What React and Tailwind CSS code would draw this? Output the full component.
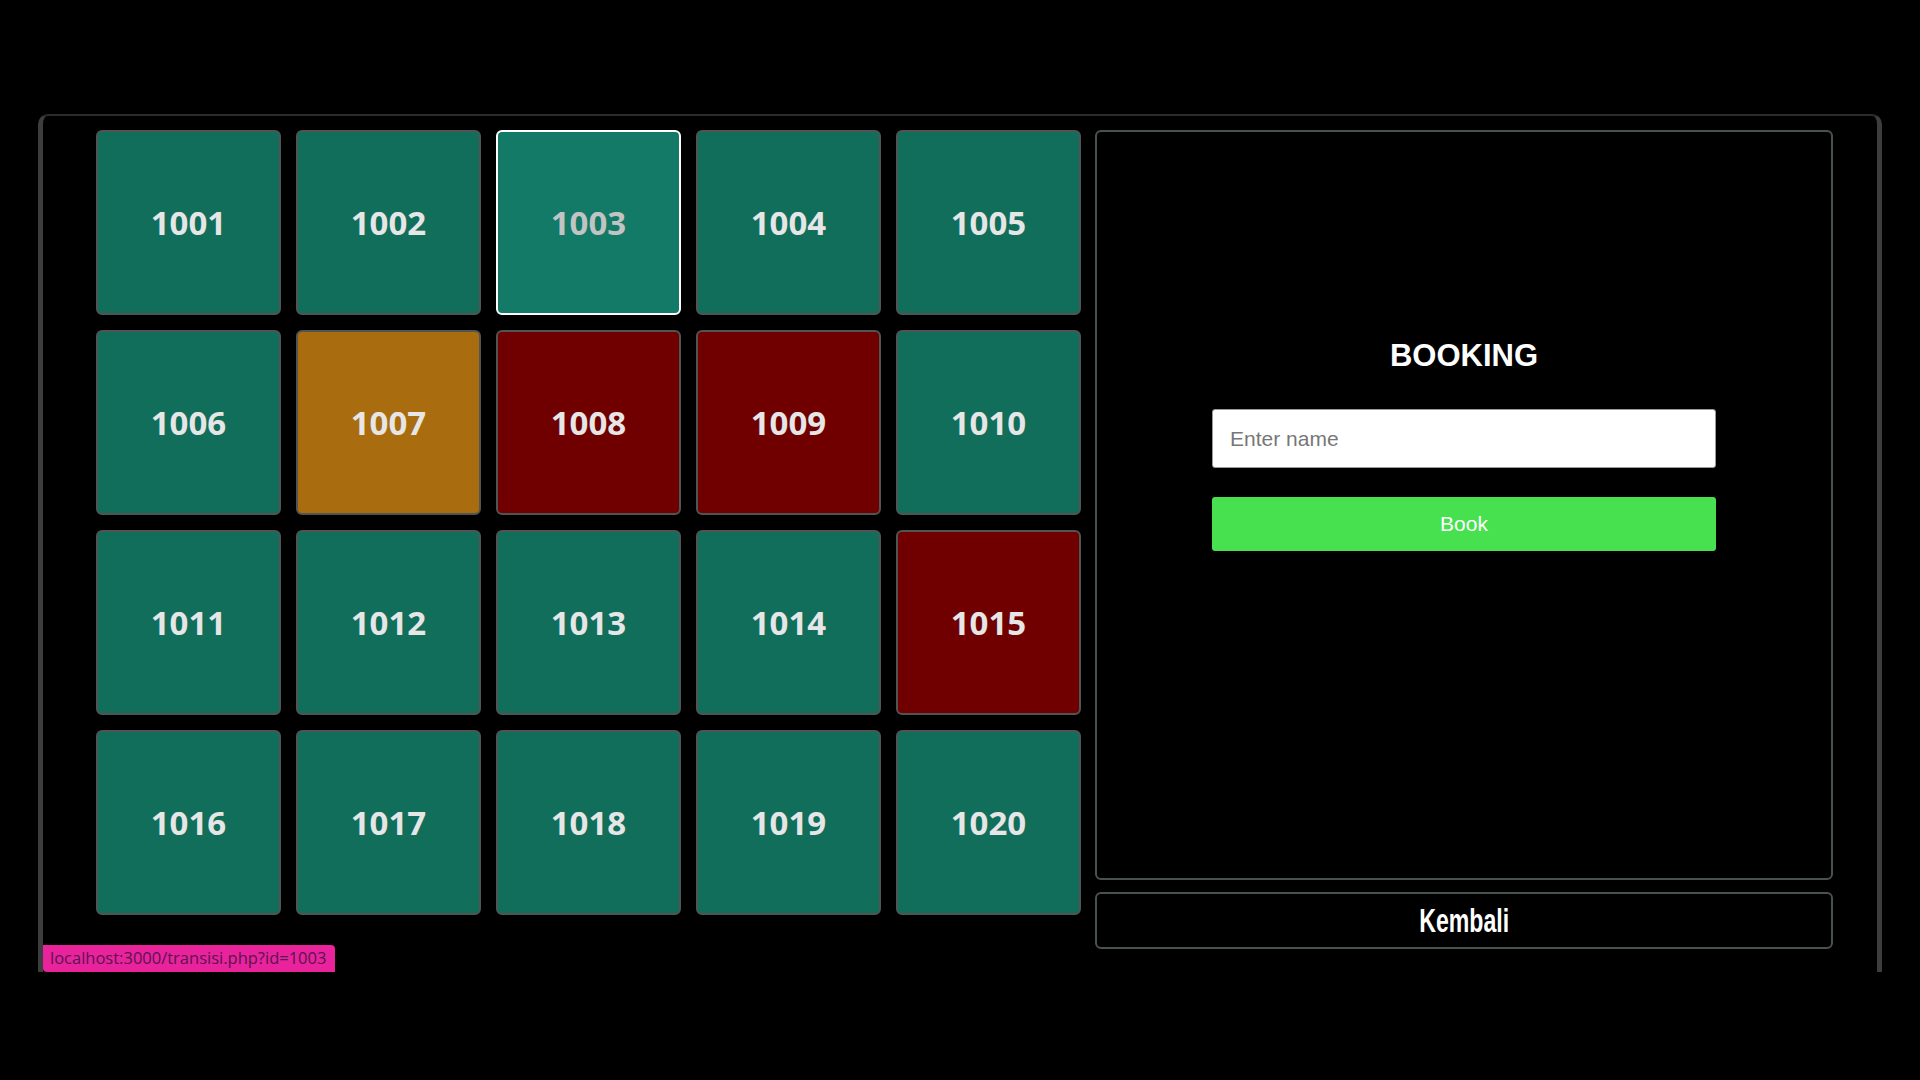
const rooms = [
  { id: 1001, status: "free" },
  { id: 1002, status: "free" },
  { id: 1003, status: "selected" },
  { id: 1004, status: "free" },
  { id: 1005, status: "free" },
  { id: 1006, status: "free" },
  { id: 1007, status: "pending" },
  { id: 1008, status: "booked" },
  { id: 1009, status: "booked" },
  { id: 1010, status: "free" },
  { id: 1011, status: "free" },
  { id: 1012, status: "free" },
  { id: 1013, status: "free" },
  { id: 1014, status: "free" },
  { id: 1015, status: "booked" },
  { id: 1016, status: "free" },
  { id: 1017, status: "free" },
  { id: 1018, status: "free" },
  { id: 1019, status: "free" },
  { id: 1020, status: "free" },
];

const tileStyles = {
  free: "bg-[#106e5b] border-[#505453] text-[#e6e6e6]",
  selected: "bg-[#127a66] border-white text-[#c2c4c3]",
  pending: "bg-[#a96c0e] border-[#505453] text-[#e6e6e6]",
  booked: "bg-[#700000] border-[#505453] text-[#e6e6e6]",
};

export default function App() {
  return (
    <div className="w-full h-[1080px] bg-black overflow-hidden">
      <div className="relative ml-[38px] mt-[114px] w-[1844px] h-[858px] border-x-[5px] border-t-2 border-[#3d3d3d] border-t-[#2b2b2b] rounded-t-[10px]">
        <div className="flex items-start gap-[14px] pl-[53px] pt-[14px]">
          {/* Rooms */}
          <div className="grid grid-cols-5 gap-[15px] w-[985px]">
            {rooms.map((room) => (
              <div
                key={room.id}
                className={`h-[185px] border-2 rounded-[6px] flex items-center justify-center font-['Open_Sans',sans-serif] font-bold text-[33px] ${tileStyles[room.status]}`}
              >
                {room.id}
              </div>
            ))}
          </div>

          {/* Booking side */}
          <div className="w-[738px] flex flex-col">
            <div className="h-[750px] border-2 border-[#4a5250] rounded-[6px] flex flex-col items-center pt-[206px] font-['Liberation_Sans',Arial,sans-serif]">
              <h2 className="text-[31px] leading-[36px] font-bold text-white">BOOKING</h2>
              <input
                type="text"
                placeholder="Enter name"
                className="mt-[35px] w-[504px] h-[59px] bg-white rounded-[3px] border border-[#9a9a9a] pl-[17px] text-[21px] text-black placeholder-[#777] focus:outline-none"
              />
              <button className="mt-[29px] w-[504px] h-[54px] bg-[#47e04f] rounded-[3px] text-[21px] text-white">
                Book
              </button>
            </div>
            <button className="mt-[12px] h-[57px] border-2 border-[#4a5250] rounded-[6px] flex items-center justify-center font-['Liberation_Sans',Arial,sans-serif]">
              <span className="inline-block text-[33px] font-bold text-white scale-x-[0.7]">Kembali</span>
            </button>
          </div>
        </div>

        {/* Browser status bar */}
        <div className="absolute left-0 bottom-0 h-[27px] pl-[7px] pr-[9px] bg-[#e8239c] rounded-tr-[4px] rounded-bl-[4px] flex items-center font-['Open_Sans',sans-serif] text-[16.5px] text-[#5a1450]">
          localhost:3000/transisi.php?id=1003
        </div>
      </div>
    </div>
  );
}
